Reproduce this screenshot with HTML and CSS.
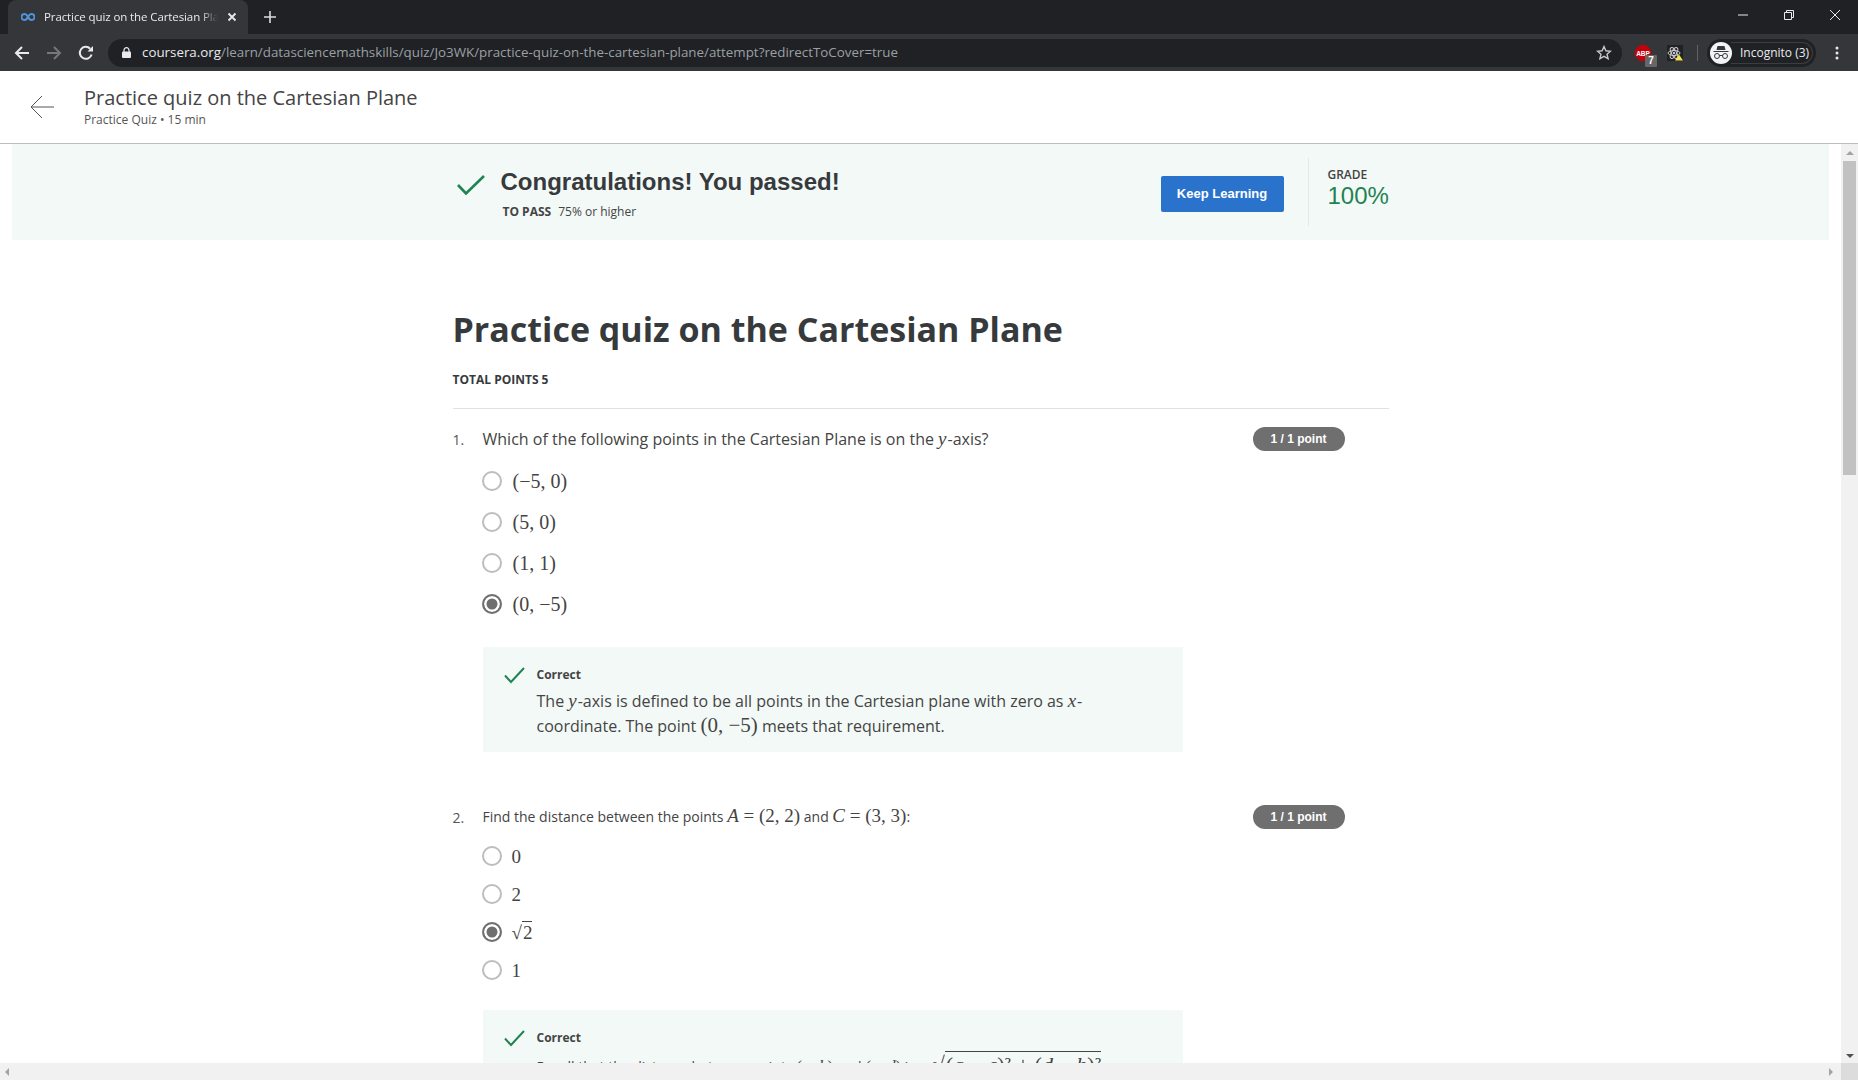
FILE: index.html
```html
<!DOCTYPE html>
<html lang="en">
<head>
  <meta charset="UTF-8">
  <title>Practice quiz on the Cartesian Plane</title>
  <link rel="stylesheet" href="styles.css">
</head>
<body>
  <div class="tabstrip">
    <div class="tab">
      <svg class="favicon" width="14" height="8" viewBox="0 0 14 8"><path d="M7 4C6 2 5 1 3.500 1A3 3 0 0 0 3.500 7C5 7 6 6 7 4C8 2 9 1 10.500 1A3 3 0 0 1 10.500 7C9 7 8 6 7 4Z" fill="none" stroke="#4f93d8" stroke-width="2"/></svg>
      <span class="tab-title">Practice quiz on the Cartesian Plane</span>
      <svg class="tab-close" width="10" height="10" viewBox="0 0 10 10"><path d="M1.500 1.500L8.500 8.500M8.500 1.500L1.500 8.500" stroke="#e8eaed" stroke-width="1.800"/></svg>
    </div>
    <svg class="new-tab" width="12" height="12" viewBox="0 0 12 12"><path d="M6 0V12M0 6H12" stroke="#dadce0" stroke-width="1.600"/></svg>
    <div class="win-controls">
      <svg width="10" height="10" viewBox="0 0 10 10"><path d="M0 5H10" stroke="#e8eaed"/></svg>
      <svg width="10" height="10" viewBox="0 0 10 10"><path d="M.5 2.500H7.500V9.500H.5ZM2.500 2.500V.5H9.500V7.500H7.500" fill="none" stroke="#e8eaed"/></svg>
      <svg width="10" height="10" viewBox="0 0 10 10"><path d="M0 0L10 10M10 0L0 10" stroke="#e8eaed"/></svg>
    </div>
  </div>

  <div class="toolbar">
    <svg class="nav-icon" width="16" height="16" viewBox="0 0 16 16"><path d="M15 8H2M8 2L2 8L8 14" fill="none" stroke="#e8eaed" stroke-width="2"/></svg>
    <svg class="nav-icon" width="16" height="16" viewBox="0 0 16 16"><path d="M1 8H14M8 2L14 8L8 14" fill="none" stroke="#75777a" stroke-width="2"/></svg>
    <svg class="nav-icon" width="16" height="16" viewBox="0 0 16 16"><path d="M13.600 9.500A6 6 0 1 1 12.200 3.700" fill="none" stroke="#e8eaed" stroke-width="2"/><path d="M9.500 6.500H15V1Z" fill="#e8eaed"/></svg>
    <div class="omnibox">
      <svg class="lock" width="9" height="11" viewBox="0 0 9 11"><path d="M2 5V3.200A2.500 2.500 0 0 1 7 3.200V5" fill="none" stroke="#e8eaed" stroke-width="1.200"/><rect y="4.500" width="9" height="6.500" rx="1" fill="#e8eaed"/></svg>
      <span class="url"><span class="url-host">coursera.org</span>/learn/datasciencemathskills/quiz/Jo3WK/practice-quiz-on-the-cartesian-plane/attempt?redirectToCover=true</span>
      <svg class="star" width="16" height="15" viewBox="0 0 16 15"><path d="M8 1.500L9.900 5.800L14.500 6.200L11 9.200L12.100 13.700L8 11.300L3.900 13.700L5 9.200L1.500 6.200L6.100 5.800Z" fill="none" stroke="#c4c6c9" stroke-width="1.400"/></svg>
    </div>
    <div class="ext abp">
      <svg width="16" height="16" viewBox="0 0 16 16"><path d="M5 0H11L16 5V11L11 16H5L0 11V5Z" fill="#c4000b"/><text x="8" y="10.500" class="abp-text">ABP</text></svg>
      <span class="abp-badge">7</span>
    </div>
    <div class="ext react">
      <svg width="16" height="16" viewBox="0 0 16 16"><rect width="16" height="16" fill="#202124"/><g fill="none" stroke="#c9cbcf" stroke-width="1"><ellipse cx="7" cy="8" rx="6" ry="2.500"/><ellipse cx="7" cy="8" rx="6" ry="2.500" transform="rotate(60 7 8)"/><ellipse cx="7" cy="8" rx="6" ry="2.500" transform="rotate(120 7 8)"/></g><circle cx="7" cy="8" r="1.200" fill="#c9cbcf"/><path d="M12 9.500L16 15.500H8Z" fill="#f5e44a"/></svg>
    </div>
    <div class="tb-sep"></div>
    <div class="profile">
      <span class="avatar">
        <svg width="18" height="14" viewBox="0 0 18 14"><path d="M5.500 0H12.500L13.500 4H4.500ZM1.500 5H16.500V6H1.500Z" fill="#35363a"/><g fill="none" stroke="#35363a" stroke-width="1"><circle cx="5" cy="10" r="2.500"/><circle cx="13" cy="10" r="2.500"/><path d="M7.500 9.500H10.500"/></g></svg>
      </span>
      <span class="profile-name">Incognito (3)</span>
    </div>
    <svg class="menu-dots" width="4" height="14" viewBox="0 0 4 14"><circle cx="2" cy="2" r="1.500" fill="#e8eaed"/><circle cx="2" cy="7" r="1.500" fill="#e8eaed"/><circle cx="2" cy="12" r="1.500" fill="#e8eaed"/></svg>
  </div>

  <header class="quiz-header">
    <svg class="back" width="24" height="24" viewBox="0 0 24 24"><path d="M24 12H1M12 1L1 12L12 23" fill="none" stroke="#555" stroke-width="1"/></svg>
    <div>
      <div class="quiz-title">Practice quiz on the Cartesian Plane</div>
      <div class="quiz-sub">Practice Quiz • 15 min</div>
    </div>
  </header>

  <div class="viewport">
    <main class="page">
      <section class="banner">
        <div class="banner-inner">
          <svg class="banner-check" width="28" height="20" viewBox="0 0 28 20"><path d="M1 10L9 18.500L27 1" fill="none" stroke="#1f8354" stroke-width="2.600"/></svg>
          <div class="banner-text">
            <div class="banner-title">Congratulations! You passed!</div>
            <div class="banner-pass"><b>TO PASS</b>75% or higher</div>
          </div>
          <button class="keep-btn">Keep Learning</button>
          <div class="grade">
            <div class="grade-label">GRADE</div>
            <div class="grade-value">100%</div>
          </div>
        </div>
      </section>

      <div class="column">
        <h1>Practice quiz on the Cartesian Plane</h1>
        <div class="total">TOTAL POINTS 5</div>

        <article class="question q-one">
          <div class="q-head">
            <span class="q-num">1.</span>
            <span class="q-text">Which of the following points in the Cartesian Plane is on the <i class="m">y</i>-axis?</span>
            <span class="pill">1 / 1 point</span>
          </div>
          <ul class="options">
            <li><span class="radio"></span><span class="m">(−5, 0)</span></li>
            <li><span class="radio"></span><span class="m">(5, 0)</span></li>
            <li><span class="radio"></span><span class="m">(1, 1)</span></li>
            <li><span class="radio on"></span><span class="m">(0, −5)</span></li>
          </ul>
          <div class="feedback">
            <svg class="fb-check" width="21" height="17" viewBox="0 0 21 17"><path d="M1 8.500L7 15L20 1" fill="none" stroke="#1f8354" stroke-width="2"/></svg>
            <div>
              <div class="fb-label">Correct</div>
              <p>The <i class="m">y</i>-axis is defined to be all points in the Cartesian plane with zero as <i class="m">x</i>-<br>coordinate. The point <span class="m big">(0, −5)</span> meets that requirement.</p>
            </div>
          </div>
        </article>

        <article class="question q-two">
          <div class="q-head">
            <span class="q-num">2.</span>
            <span class="q-text small">Find the distance between the points <span class="m mid"><i>A</i> = (2, 2)</span> and <span class="m mid"><i>C</i> = (3, 3)</span>:</span>
            <span class="pill">1 / 1 point</span>
          </div>
          <ul class="options">
            <li><span class="radio"></span><span class="m">0</span></li>
            <li><span class="radio"></span><span class="m">2</span></li>
            <li><span class="radio on"></span><span class="m">√<span class="over">2</span></span></li>
            <li><span class="radio"></span><span class="m">1</span></li>
          </ul>
          <div class="feedback">
            <svg class="fb-check" width="21" height="17" viewBox="0 0 21 17"><path d="M1 8.500L7 15L20 1" fill="none" stroke="#1f8354" stroke-width="2"/></svg>
            <div>
              <div class="fb-label">Correct</div>
              <p class="recall">Recall that the distance between points <span class="m">(<i>a</i>, <i>b</i>)</span> and <span class="m">(<i>c</i>, <i>d</i>)</span> is <span class="m big">√<span class="over">(<i>a</i> − <i>c</i>)² + (<i>d</i> − <i>b</i>)²</span></span></p>
            </div>
          </div>
        </article>
      </div>
    </main>
    <div class="vscroll">
      <span class="arrow up"></span>
      <span class="thumb"></span>
      <span class="arrow down"></span>
    </div>
  </div>

  <div class="hscroll">
    <span class="arrow left"></span>
    <span class="arrow right"></span>
    <span class="corner"></span>
  </div>
</body>
</html>
```

FILE: styles.css
```css
* {box-sizing: border-box;}
html, body {margin: 0; height: 1080px; overflow: hidden;}
body {display: flex; flex-direction: column; background: #fff; color: #373a3c; font-family: "Open Sans", sans-serif;}

/* browser chrome */
.tabstrip {height: 34px; flex: none; display: flex; align-items: flex-end; background: #202124; padding-left: 8px;}
.tab {width: 240px; height: 34px; display: flex; align-items: center; padding: 0 11px 0 13px; background: #35363a; border-radius: 8px 8px 0 0; color: #e8eaed; font-size: 11.500px;}
.favicon {flex: none; margin-right: 9px;}
.tab-title {flex: 1; margin-top: -2px; letter-spacing: -.1px; white-space: nowrap; overflow: hidden; -webkit-mask-image: linear-gradient(to right, #000 90%, transparent);}
.tab-close {flex: none; margin-left: 9px;}
.new-tab {align-self: center; margin-left: 16px;}
.win-controls {margin-left: auto; align-self: center; display: flex; gap: 36px; padding-right: 18px; margin-top: -4px;}

.toolbar {height: 37px; flex: none; display: flex; align-items: center; background: #35363a; padding-left: 14px;}
.nav-icon {flex: none; margin-right: 16px;}
.omnibox {width: 1514px; height: 28px; margin-left: -2px; display: flex; align-items: center; padding: 0 10px 0 14px; background: #202124; border-radius: 14px;}
.lock {flex: none; margin-right: 11px;}
.url {flex: 1; margin-top: -2px; color: #9aa0a6; font-size: 13.350px; white-space: nowrap;}
.url-host {color: #e8eaed;}
.ext {position: relative; flex: none; width: 16px; height: 16px; display: block;}
.ext svg {display: block;}
.abp {margin-left: 13px;}
.abp-text {font: bold 6.500px "Liberation Sans", sans-serif; fill: #fff; text-anchor: middle;}
.abp-badge {position: absolute; right: -6px; bottom: -6px; width: 12px; height: 12px; background: #666; border-radius: 1px; color: #fff; font: bold 10px/12px "Liberation Sans", sans-serif; text-align: center;}
.react {margin-left: 16px;}
.tb-sep {width: 1px; height: 16px; margin: 0 9px 0 14px; background: #5f6368;}
.profile {width: 109px; height: 28px; display: flex; align-items: center; padding: 0 3px; background: #202124; border-radius: 14px; color: #e8eaed; font-size: 12px;}
.avatar {width: 22px; height: 22px; flex: none; display: flex; align-items: center; justify-content: center; background: #f1f3f4; border-radius: 50%;}
.profile-name {flex: 1; height: 22px; padding-left: 9px; margin-left: -1px; border: 1px solid #3c3d41; border-left: 0; border-radius: 0 11px 11px 0; line-height: 19px; white-space: nowrap;}
.menu-dots {margin-left: 19px;}

/* quiz header */
.quiz-header {height: 73px; flex: none; display: flex; align-items: center; padding-left: 30px; background: #fff; border-bottom: 1px solid #bdbdbd;}
.back {margin-right: 30px;}
.quiz-title {margin-bottom: 1px; font-size: 20px; line-height: 27px; color: #444;}
.quiz-sub {font-size: 12px; line-height: 16px; color: #555; margin-bottom: 2px;}

/* scrolling area */
.viewport {flex: 1; min-height: 0; display: flex;}
.page {flex: 1; min-width: 0; overflow: hidden;}
.vscroll {width: 17px; flex: none; display: flex; flex-direction: column; align-items: center; background: #f1f1f1;}
.thumb {width: 13px; height: 314px; margin-top: 6px; background: #c1c1c1;}
.vscroll .up {margin-top: 7px;}
.vscroll .down {margin-top: auto; margin-bottom: 5px;}
.arrow {display: block; width: 0; height: 0; border: 4px solid transparent;}
.up {border-top-width: 0; border-bottom-color: #a3a3a3;}
.down {border-bottom-width: 0; border-top-color: #505050;}
.left {border-left-width: 0; border-right-color: #a3a3a3;}
.right {border-right-width: 0; border-left-color: #a3a3a3;}
.hscroll {height: 17px; flex: none; display: flex; align-items: center; padding-left: 5px; background: #f1f1f1;}
.hscroll .right {margin-left: auto; margin-right: 4px;}
.corner {width: 17px; height: 17px; margin-left: 4px; background: #dcdcdc;}

/* passed banner */
.banner {height: 96px; margin: 0 12px; padding-top: 14px; background: #f3f9f7;}
.banner-inner {width: 936px; height: 68px; margin: 0 auto; display: flex; align-items: flex-start;}
.banner-check {flex: none; margin: 17px 16px 0 4px;}
.banner-text {flex: 1;}
.banner-title {margin-top: 9px; font: bold 24px/30px "Liberation Sans", sans-serif; color: #373a3c;}
.banner-pass {margin: 7px 0 0 2px; font-size: 12px; line-height: 16px; color: #444;}
.banner-pass b {margin-right: 7px; font-weight: 700;}
.keep-btn {width: 123px; height: 36px; margin-top: 18px; padding: 0 0 2px; border: 0; border-radius: 2px; background: #2a73cc; color: #fff; font: bold 13px "Liberation Sans", sans-serif;}
.grade {width: 81px; height: 68px; margin-left: 24px; padding: 9px 0 0 19px; border-left: 1px solid #e5e8e6;}
.grade-label {font-size: 12px; line-height: 16px; font-weight: 600; color: #444;}
.grade-value {margin-top: -2px; font: 24px/29px "Liberation Sans", sans-serif; color: #1f8354;}

/* quiz body */
.column {width: 936px; margin: 0 auto;}
h1 {margin: 0; padding-top: 65px; font-size: 34px; line-height: 48px; font-weight: 700; color: #373a3c;}
.total {margin-top: 18px; padding-bottom: 20px; border-bottom: 1px solid #e1e1e1; font-size: 12px; line-height: 17px; font-weight: 700; color: #373a3c;}
.question {position: relative;}
.q-head {display: flex; align-items: center;}
.q-num {width: 30px; font-size: 14px; color: #555;}
.q-text {flex: 1; font-size: 16px; color: #444;}
.q-text.small {margin-top: -2px; font-size: 14px;}
.pill {width: 92px; height: 24px; margin-right: 44px; background: #6f6f6f; border-radius: 12px; color: #fff; font: bold 12px/24px "Liberation Sans", sans-serif; text-align: center;}
.m {font-family: "Liberation Serif", serif; font-size: 20px; line-height: 1; color: #444;}
i.m {font-size: 19px; margin-right: 1px;}
.m.mid {font-size: 19px;}
.m.big {font-size: 21px;}
.recall .m {font-size: 17px;}
.recall .m.big {margin-left: 14px; font-size: 22px;}
.over {border-top: 1px solid #444; padding-left: 1px;}
.options {list-style: none; margin: 0; padding: 0 0 0 29px;}
.options li {display: flex; align-items: center; gap: 11px;}
.radio {width: 20px; height: 20px; flex: none; border: 2px solid #bdbdbd; border-radius: 50%; background: #fff;}
.radio.on {border-color: #6f6f6f; box-shadow: inset 0 0 0 2.500px #fff; background: #6f6f6f;}
.q-one {padding-top: 18px;}
.q-one .options {margin-top: 9px;}
.q-one .options li {height: 41px;}
.q-two {padding-top: 53px;}
.q-two .options {margin-top: 8px;}
.q-two .options li {height: 38px; gap: 10px;}
.q-two .options .m {font-size: 19px;}
.feedback {width: 700px; margin-left: 30px; display: flex; background: #f3f9f7;}
.q-one .feedback {height: 105px; margin-top: 23px;}
.q-two .feedback {height: 105px; margin-top: 21px;}
.fb-check {flex: none; margin: 20px 12px 0 21px;}
.fb-label {padding-top: 19px; font-size: 12px; line-height: 18px; font-weight: 700; color: #444;}
.feedback p {margin: 5px 0 0; font-size: 16px; line-height: 25px; color: #444;}
.feedback p.recall {font-size: 14px; margin-top: 7px;}
```
